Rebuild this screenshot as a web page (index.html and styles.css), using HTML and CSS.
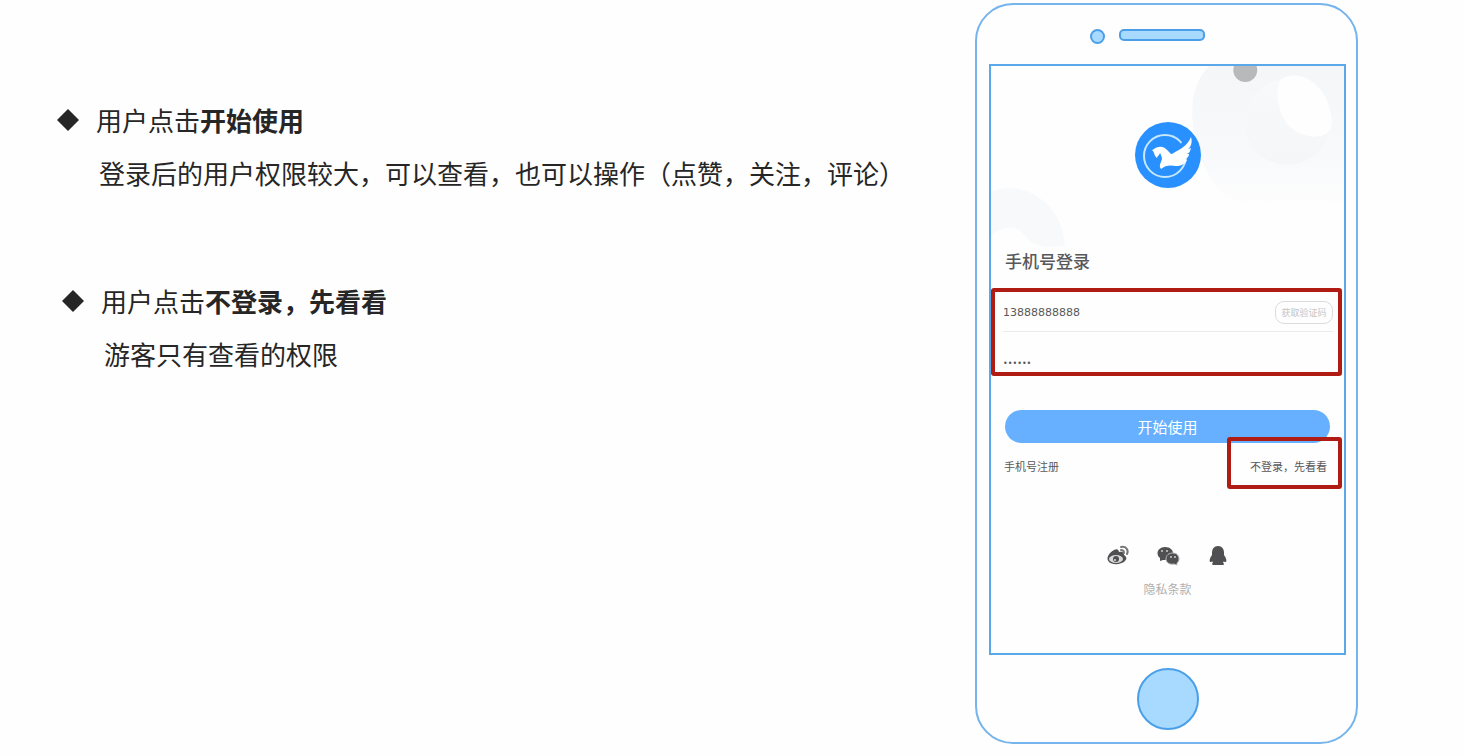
FILE: index.html
```html
<!DOCTYPE html>
<html lang="zh-CN">
<head>
    <meta charset="UTF-8">
    <title>手机号登录</title>
    <link rel="stylesheet" href="styles.css">
</head>
<body>
    <main class="slide">
        <!-- NOTES -->
        <ul class="notes">
            <li class="note">
                <svg class="diamond" viewBox="0 0 22 22"><path d="M11 0L22 11L11 22L0 11Z"/></svg>
                <p>用户点击<b>开始使用</b></p>
                <p class="detail">登录后的用户权限较大，可以查看，也可以操作（点赞，关注，评论）</p>
            </li>
            <li class="note note-guest">
                <svg class="diamond" viewBox="0 0 22 22"><path d="M11 0L22 11L11 22L0 11Z"/></svg>
                <p>用户点击<b>不登录，先看看</b></p>
                <p class="detail">游客只有查看的权限</p>
            </li>
        </ul>

        <!-- PHONE -->
        <section class="phone">
            <div class="phone-top">
                <span class="camera"></span>
                <span class="speaker"></span>
            </div>
            <div class="screen">
                <svg class="backdrop" viewBox="0 0 354 190">
                    <defs>
                        <linearGradient id="fade" x1="0" y1="0" x2="0" y2="1">
                            <stop offset="0" stop-color="#f5f6f8"/>
                            <stop offset="0.6" stop-color="#f8f9fb"/>
                            <stop offset="1" stop-color="#fefefe"/>
                        </linearGradient>
                        <linearGradient id="ball" x1="0" y1="0" x2="0" y2="1">
                            <stop offset="0" stop-color="#f8f9fb"/>
                            <stop offset="1" stop-color="#f4f6f8"/>
                        </linearGradient>
                    </defs>
                    <path fill="url(#fade)" d="M219 0C205 13 201 32 202 52C203 82 216 110 232 128C260 150 310 149 354 140V0Z"/>
                    <circle cx="297" cy="56" r="43" fill="url(#ball)"/>
                    <path fill="#fefefe" d="M291 13C315 0 341 25 342 57C342 74 316 75 301 62C289 53 283 23 291 13Z"/>
                    <path fill="#f8f9fb" d="M0 126C34 112 73 140 74 180C56 184 43 180 36 173C26 156 10 162 0 170Z"/>
                    <circle cx="255" cy="4" r="12" fill="#b8b9ba"/>
                </svg>
                <svg class="logo" viewBox="0 0 66 66">
                    <circle cx="33" cy="33" r="33" fill="#2891ff"/>
                    <circle cx="30" cy="34" r="21" fill="none" stroke="#c7e9ff" stroke-width="2"/>
                    <path fill="#2891ff" d="M40 28L51 16L57 14L56 24L42 31Z"/>
                    <path fill="#fff" d="M17 28C19 28 20 25 24 25C29 24 32 28 36 32C38 32 39 30 42 29C48 26 53 22 56 15C57 18 57 22 55 25L53 27L56 26C55 30 54 31 52 32L54 32C54 35 52 36 50 37L52 38C50 42 46 44 41 44C36 43 30 43 26 47C23 43 27 40 27 36C26 34 26 32 25 31L24 33C23 34 22 35 22 36C19 34 20 31 17 28Z"/>
                </svg>
                <h1 class="title">手机号登录</h1>
                <form class="login">
                    <div class="fields">
                        <div class="field field-phone">
                            <input type="tel" aria-label="手机号" value="13888888888">
                            <button type="button" class="code">获取验证码</button>
                        </div>
                        <div class="field">
                            <input type="password" aria-label="验证码" value="123456">
                        </div>
                    </div>
                    <button type="button" class="start">开始使用</button>
                </form>
                <div class="links">
                    <a href="#">手机号注册</a>
                    <a href="#" class="skip">不登录，先看看</a>
                </div>
                <div class="social">
                    <a href="#" aria-label="微博">
                        <svg viewBox="0 0 24 24">
                            <path fill="#505052" d="M8 6C11 4 13 6 13 8C16 7 18 8 18 11C21 13 21 15 19 17C15 21 6 21 3 18C-1 14 4 8 8 6Z"/>
                            <ellipse cx="10" cy="15" rx="7" ry="4" fill="#d8d8d8"/>
                            <circle cx="10" cy="15" r="3" fill="#505052"/>
                            <circle cx="9" cy="16" r="1" fill="#ddd"/>
                            <path fill="none" stroke="#777" stroke-width="2" stroke-linecap="round" d="M15 3C20 2 23 6 21 10M15 6C18 6 18 8 18 9"/>
                        </svg>
                    </a>
                    <a href="#" aria-label="微信">
                        <svg viewBox="0 0 24 24">
                            <path fill="#505052" d="M9 3C14 3 17 6 17 9C17 13 14 16 9 16L7 16L4 17L4 14C-1 10 2 3 9 3Z"/>
                            <path fill="#505052" stroke="#bbb" stroke-width="1" d="M17 9C21 9 23 12 23 15C23 17 22 18 21 19L21 21L18 20C13 21 10 18 10 15C10 11 13 9 17 9Z"/>
                            <path stroke="#ccc" stroke-width="2" stroke-linecap="round" d="M6 7v0M11 7v0M15 13v0M19 13v0"/>
                        </svg>
                    </a>
                    <a href="#" aria-label="QQ">
                        <svg viewBox="0 0 24 24">
                            <path fill="#505052" d="M12 2C16 2 18 5 18 9L18 11C20 14 21 16 20 18C19 18 18 18 18 17L17 19C19 20 18 21 16 21L8 21C6 21 5 20 7 19L6 17C6 18 5 18 4 18C3 16 4 14 6 11L6 9C6 5 8 2 12 2Z"/>
                        </svg>
                    </a>
                </div>
                <a href="#" class="terms">隐私条款</a>
            </div>
            <div class="home"></div>
        </section>
    </main>
</body>
</html>
```

FILE: styles.css
```css
* {
    box-sizing: border-box;
}
body {
    margin: 0;
    background: #fefefe;
    color: #262626;
    font-family: "Noto Sans CJK SC", sans-serif;
}
a {
    color: inherit;
    text-decoration: none;
}
button, input {
    margin: 0;
    padding: 0;
    border: none;
    background: none;
    font-family: inherit;
}
.slide {
    display: flex;
    justify-content: space-between;
    padding: 3px 107px 12px 57px;
}
.notes {
    display: flex;
    flex-direction: column;
    gap: 75px;
    margin: 0;
    padding: 90px 0 0;
    list-style: none;
    font-size: 26px;
    line-height: 53px;
}
.note {
    display: grid;
    grid-template-columns: 22px auto;
    column-gap: 17px;
    align-items: center;
}
.note-guest {
    margin-left: 5px;
}
.note p {
    margin: 0;
}
.note .detail {
    grid-column: 2;
    padding-left: 3px;
}
.diamond {
    width: 22px;
    height: 22px;
    fill: #262626;
}

/* phone body */
.phone {
    flex: 0 0 383px;
    padding: 0 10px 12px 12px;
    border: 2px solid #75b4ec;
    border-radius: 38px;
}
.phone-top {
    display: flex;
    gap: 14px;
    padding: 24px 0 20px 101px;
}
.camera, .speaker, .home {
    border: 2px solid #4a9fe8;
    background: #a8daff;
}
.camera {
    width: 15px;
    height: 15px;
    border-radius: 50%;
}
.speaker {
    width: 86px;
    height: 12px;
    border-radius: 5px;
}
.home {
    width: 62px;
    height: 62px;
    margin: 13px auto 0;
    border-radius: 50%;
}

/* login screen */
.screen {
    position: relative;
    display: flex;
    flex-direction: column;
    padding: 56px 0 55px;
    border: 2px solid #5aa7ea;
    color: #58585a;
}
.backdrop {
    position: absolute;
    top: 0;
    left: 0;
    width: 100%;
}
.logo {
    position: relative;
    align-self: center;
    width: 66px;
    height: 66px;
}
.title {
    margin: 60px 14px 15px;
    font-size: 17px;
    font-weight: 500;
    line-height: 25px;
}
.fields {
    margin-right: 2px;
    padding: 0 5px 0 8px;
    border: 4px solid #b01c14;
    border-radius: 3px;
}
.field {
    display: flex;
    align-items: center;
    justify-content: space-between;
    height: 40px;
    padding-top: 22px;
}
.field-phone {
    padding-top: 2px;
    border-bottom: 1px solid #ececec;
}
.field input {
    flex: 1;
    min-width: 0;
    color: #58585a;
    font-family: "DejaVu Sans", sans-serif;
    font-size: 11px;
}
.field input[type="password"] {
    font-size: 8px;
}
.code {
    width: 58px;
    height: 23px;
    border: 1px solid #dcdcdc;
    border-radius: 9px;
    color: #c4c4c4;
    font-size: 9px;
}
.start {
    display: block;
    width: calc(100% - 28px);
    height: 33px;
    margin: 34px 14px 0;
    border-radius: 17px;
    background: #66b0ff;
    color: #fff;
    font-size: 15px;
    line-height: 31px;
}
.links {
    position: relative;
    display: flex;
    align-items: center;
    justify-content: space-between;
    margin: -6px 2px 0 13px;
    font-size: 11px;
    line-height: 16px;
}
.links a {
    padding-top: 6px;
}
.links .skip {
    padding: 17px 11px 11px 19px;
    border: 4px solid #b01c14;
    border-radius: 3px;
}
.social {
    display: flex;
    justify-content: center;
    gap: 26px;
    margin-top: 55px;
}
.social svg {
    display: block;
    width: 24px;
    height: 24px;
}
.terms {
    align-self: center;
    margin-top: 12px;
    color: #b0b0b0;
    font-size: 12px;
    line-height: 18px;
}
```
